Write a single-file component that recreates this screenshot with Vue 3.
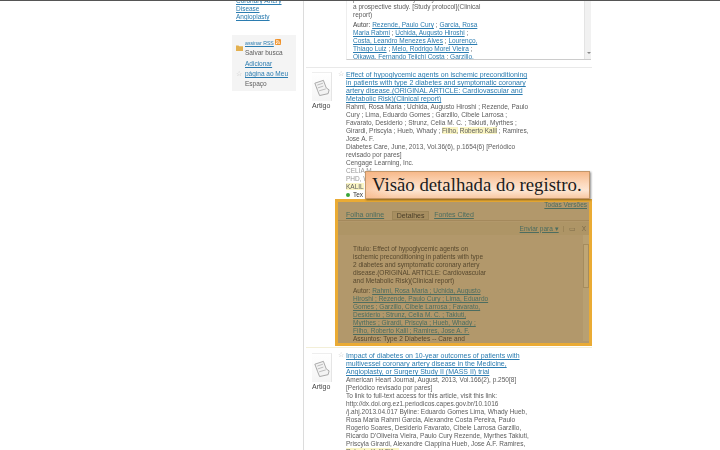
<script setup>
const topLines = [
  { t: 'a prospective study. [Study protocol](Clinical' },
  { t: 'report)' }
]
const topAuthors = [
  ['Autor:  ', 'Rezende, Paulo Cury', ' ; ', 'Garcia, Rosa'],
  ['', 'Maria Rabmi', ' ; ', 'Uchida, Augusto Hiroshi', ' ;'],
  ['', 'Costa, Leandro Menezes Alves', ' ; ', 'Lourenço,'],
  ['', 'Thiago Luiz', ' ; ', 'Melo, Rodrigo Morel Vieira', ' ;'],
  ['', 'Oikawa, Fernando Teiichi Costa', ' ; ', 'Garzillo,']
]
const r1Title = [
  'Effect of hypoglycemic agents on ischemic preconditioning',
  'in patients with type 2 diabetes and symptomatic coronary',
  'artery disease.(ORIGINAL ARTICLE: Cardiovascular and',
  'Metabolic Risk)(Clinical report)'
]
const r1Body = [
  'Rahmi, Rosa Maria ; Uchida, Augusto Hiroshi ; Rezende, Paulo',
  'Cury ; Lima, Eduardo Gomes ; Garzillo, Cibele Larrosa ;',
  'Favarato, Desiderio ; Strunz, Celia M. C. ; Takiuti, Myrthes ;'
]
const r1Rest = [
  'Jose A. F.',
  'Diabetes Care, June, 2013, Vol.36(6), p.1654(6) [Periódico',
  'revisado por pares]',
  'Cengage Learning, Inc.'
]
const detailTitle = [
  'Título:    Effect of hypoglycemic agents on',
  'ischemic preconditioning in patients with type',
  '2 diabetes and symptomatic coronary artery',
  'disease.(ORIGINAL ARTICLE: Cardiovascular',
  'and Metabolic Risk)(Clinical report)'
]
const detailAuthors = [
  ['Autor:  ', 'Rahmi, Rosa Maria ; Uchida, Augusto'],
  ['', 'Hiroshi ; Rezende, Paulo Cury ; Lima, Eduardo'],
  ['', 'Gomes ; Garzillo, Cibele Larrosa ; Favarato,'],
  ['', 'Desiderio ; Strunz, Celia M. C. ; Takiuti,'],
  ['', 'Myrthes ; Girardi, Priscyla ; Hueb, Whady ;'],
  ['', 'Filho, Roberto Kalil ; Ramires, Jose A. F.']
]
const r2Title = [
  'Impact of diabetes on 10-year outcomes of patients with',
  'multivessel coronary artery disease in the Medicine,',
  'Angioplasty, or Surgery Study II (MASS II) trial'
]
const r2Body = [
  'American Heart Journal, August, 2013, Vol.166(2), p.250[8]',
  '[Periódico revisado por pares]',
  'To link to full-text access for this article, visit this link:',
  'http://dx.doi.org.ez1.periodicos.capes.gov.br/10.1016',
  '/j.ahj.2013.04.017 Byline: Eduardo Gomes Lima, Whady Hueb,',
  'Rosa Maria Rahmi Garcia, Alexandre Costa Pereira, Paulo',
  'Rogerio Soares, Desiderio Favarato, Cibele Larrosa Garzillo,',
  'Ricardo D\'Oliveira Vieira, Paulo Cury Rezende, Myrthes Takiuti,',
  'Priscyla Girardi, Alexandre Ciappina Hueb, Jose A.F. Ramires,'
]
</script>

<template>
  <div class="page">
    <aside class="side">
      <div class="side-links">
        <a>Coronary Artery</a>
        <a>Disease</a>
        <a>Angioplasty</a>
      </div>
      <div class="side-box">
        <div class="side-row">
          <svg class="s-ic" viewBox="0 0 7 7"><path d="M0 1.500h2.500l.7.8H7V7H0z" fill="#e3b04f" /></svg>
          <a class="rss-link">assinar RSS</a>
          <svg class="rss" viewBox="0 0 6 6"><rect width="6" height="6" rx="1" fill="#f0922a" /><circle cx="1.500" cy="4.500" r=".7" fill="#fff" /><path d="M1 2.600A2.400 2.400 0 0 1 3.400 5M1 1.200A3.800 3.800 0 0 1 4.800 5" fill="none" stroke="#fff" stroke-width=".7" /></svg>
        </div>
        <div class="side-row plain">Salvar busca</div>
        <div class="side-row"><a>Adicionar</a></div>
        <div class="side-row star-row"><span class="s-star">☆</span><a>página ao Meu</a></div>
        <div class="side-row plain">Espaço</div>
      </div>
    </aside>

    <main class="main">
      <section class="top-panel">
        <div class="cut">patients with coronary artery disease:</div>
        <div v-for="l in topLines" :key="l.t" class="ln">{{ l.t }}</div>
        <div class="authors">
          <div v-for="(a, i) in topAuthors" :key="i" class="ln">
            <b class="lab">{{ a[0] }}</b><a>{{ a[1] }}</a>{{ a[2] }}<a>{{ a[3] }}</a>{{ a[4] }}
          </div>
        </div>
        <div class="top-scroll"><i></i></div>
      </section>

      <hr class="sep first" />

      <article class="result">
        <div class="thumb-col">
          <div class="thumb">
            <svg viewBox="0 0 20 28"><path d="M3 10l9-3 3 8 3 2-1 4-9 2-2-5z" fill="#f3f3f3" stroke="#9c9c9c" stroke-width=".9" /><path d="M5.500 12l6-2M6 15l6-2M7.500 18l7-2" stroke="#b4b4b4" stroke-width=".9" /></svg>
          </div>
          <span class="kind">Artigo</span>
        </div>
        <span class="star">☆</span>
        <div class="body">
          <a v-for="l in r1Title" :key="l" class="ln title">{{ l }}</a>
          <div v-for="l in r1Body" :key="l" class="ln">{{ l }}</div>
          <div class="ln">Girardi, Priscyla ; Hueb, Whady ; <mark>Filho,</mark> <mark>Roberto Kalil</mark> ; Ramires,</div>
          <div v-for="l in r1Rest" :key="l" class="ln">{{ l }}</div>
          <div class="ln faint">CELIA M.</div>
          <div class="ln faint">PHD, W</div>
          <div class="ln"><mark>KALIL</mark></div>
          <div class="ln text-row"><i class="dot"></i>Tex</div>
        </div>
      </article>

      <section class="detail">
        <div class="versions"><a>Todas Versões</a></div>
        <nav class="tabs">
          <a>Folha online</a>
          <span class="tab-on">Detalhes</span>
          <a>Fontes Cited</a>
        </nav>
        <div class="tools">
          <a>Enviar para ▾</a>
          <span class="bar"></span>
          <span class="tool">▭</span>
          <span class="tool">X</span>
        </div>
        <div class="detail-body">
          <div class="detail-text">
            <div v-for="l in detailTitle" :key="l" class="ln">{{ l }}</div>
            <div class="d-authors">
              <div v-for="(a, i) in detailAuthors" :key="i" class="ln">{{ a[0] }}<a>{{ a[1] }}</a></div>
            </div>
            <div class="ln d-last">Assuntos:   Type 2 Diabetes -- Care and</div>
          </div>
          <div class="d-scroll"><i></i></div>
        </div>
      </section>

      <hr class="sep second" />

      <article class="result r2">
        <div class="thumb-col">
          <div class="thumb">
            <svg viewBox="0 0 20 28"><path d="M3 10l9-3 3 8 3 2-1 4-9 2-2-5z" fill="#f3f3f3" stroke="#9c9c9c" stroke-width=".9" /><path d="M5.500 12l6-2M6 15l6-2M7.500 18l7-2" stroke="#b4b4b4" stroke-width=".9" /></svg>
          </div>
          <span class="kind">Artigo</span>
        </div>
        <span class="star">☆</span>
        <div class="body">
          <a v-for="l in r2Title" :key="l" class="ln title">{{ l }}</a>
          <div v-for="l in r2Body" :key="l" class="ln">{{ l }}</div>
          <div class="ln"><mark>Roberto Kalil Filho</mark></div>
        </div>
      </article>
    </main>

    <div class="callout">Visão detalhada do registro.</div>
  </div>
</template>

<style>
html, body { margin: 0; background: #fff; }
</style>

<style scoped>
.page {
  position: relative;
  display: flex;
  width: 720px;
  height: 450px;
  padding-left: 232px;
  box-sizing: border-box;
  overflow: hidden;
  background: #fff;
  border-top: 1px solid #555;
  font: 6.5px/8px "Liberation Sans", Arial, sans-serif;
  color: #5c5c5c;
}
.page > aside, .page > main { filter: blur(0.42px); }
a { color: #2b7cb0; text-decoration: underline; }
.ln { display: block; height: 8px; white-space: nowrap; }
mark { background: #fbf6c4; color: inherit; }

.side { width: 64px; margin-right: 7px; flex: none; }
.side-links { margin-top: -4px; padding-left: 4px; }
.side-links a { display: block; height: 8px; white-space: nowrap; }
.side-box { margin-top: 14px; height: 56px; padding-top: 3px; box-sizing: border-box; background: #f4f4f4; position: relative; }
.side-row { display: flex; align-items: center; height: 10.300px; padding-left: 13px; position: relative; white-space: nowrap; }
.rss-link { font-size: 5.200px; }
.s-ic { position: absolute; left: 4px; top: 6px; width: 7px; height: 7px; }
.rss { width: 6px; height: 6px; margin: -3px 0 0 1px; }
.s-star { position: absolute; left: 4px; color: #bbb; font-size: 7px; }

.main { flex: 1; border-left: 1px solid #dcdcdc; min-width: 0; }

.top-panel {
  position: relative;
  margin-left: 42px;
  width: 245px;
  height: 59px;
  padding-left: 6px;
  box-sizing: border-box;
  border-left: 1px solid #eee;
  border-bottom: 1px solid #ccc;
  overflow: hidden;
}
.cut { margin-top: -6px; height: 8px; white-space: nowrap; }
.lab { font-weight: 400; color: #444; }
.authors { margin-top: 2px; }
.top-scroll { position: absolute; right: 0; top: 0; bottom: 0; width: 6px; background: #f1f1f1; border-left: 1px solid #e4e4e4; }
.top-scroll i { position: absolute; left: 1.500px; bottom: 3px; border: 2px solid transparent; border-top-color: #888; }

.sep { margin: 0 0 0 2px; width: 286px; border: 0; height: 1px; background: #e9e9e9; }
.sep.first { margin-top: 7px; }
.sep.second { margin-top: 1px; background: #f3efd8; }

.result { display: flex; padding: 3px 0 0 8px; }
.thumb-col { width: 26px; flex: none; }
.thumb {
  width: 19px;
  height: 28px;
  margin-top: 1px;
  border-top: 1px solid #eee;
  border-right: 1px solid #e5e5e5;
  background: linear-gradient(#fff, #f5f5f5);
}
.thumb svg { display: block; width: 19px; height: 28px; }
.kind { display: block; margin-top: 1px; font-size: 7px; color: #444; }
.star { width: 8px; flex: none; margin-top: -1px; color: #bbb; font-size: 7px; }
.title { font-size: 7px; font-weight: 400; }
.faint { color: #999; }
.text-row { color: #333; }
.dot { display: inline-block; width: 4px; height: 4px; border-radius: 50%; background: #3aa53a; margin-right: 3px; }

.detail {
  margin-left: 31px;
  width: 257px;
  height: 147px;
  box-sizing: border-box;
  border: 3px solid #eaab34;
  background: #b2986b;
  color: #57482e;
  overflow: hidden;
  display: flex;
  flex-direction: column;
}
.detail a { color: #4c6d60; }
.versions { margin-top: -1px; height: 8px; text-align: right; padding-right: 2px; }
.tabs { display: flex; align-items: center; height: 10px; margin-top: 1px; padding-left: 8px; border-bottom: 1px solid #a4895c; font-size: 7px; }
.tab-on { width: 37px; box-sizing: border-box; text-align: center; height: 9px; margin: 0 5px 0 8px; background: #a78e60; border: 1px solid #9c8558; color: #4a3e28; }
.tools { display: flex; align-items: center; justify-content: flex-end; height: 13px; padding-right: 3px; background: #ae9566; margin-top: 1px; }
.tools a { font-size: 6.500px; }
.bar { width: 1px; height: 6px; margin: 0 5px 0 4px; background: #9c8558; }
.tool { color: #7b6a48; margin-right: 6px; }
.tool:last-child { margin-right: 0; }
.detail-body { position: relative; flex: 1; padding: 10px 0 0 15px; min-height: 0; }
.d-authors { margin-top: 2px; }
.d-last { margin-top: 0; height: 9px; border-bottom: 1px solid #5c4e34; margin-left: -15px; padding-left: 15px; width: 251px; }
.d-scroll { position: absolute; top: 0; right: 0; bottom: 2px; width: 6px; background: #b8a072; }
.d-scroll i { position: absolute; left: 0; top: 9px; width: 6px; height: 44px; background: #bfa676; border: 1px solid #a58c5e; box-sizing: border-box; }

.r2 { padding-top: 4px; }

.callout {
  position: absolute;
  left: 365px;
  top: 170px;
  width: 225px;
  height: 28px;
  box-sizing: border-box;
  padding-left: 6px;
  background: linear-gradient(90deg, rgba(247, 180, 130, .55), rgba(255, 230, 205, 0) 12%), linear-gradient(#f7b98a, #fcd9bd 45%, #fde6d3 70%, #f9c9a3);
  border: 1px solid #c4976a;
  box-shadow: 1px 1px 2px rgba(0, 0, 0, .45);
  font: 18.8px/26px "Liberation Serif", "Times New Roman", serif;
  color: #1c1c1c;
  white-space: nowrap;
}
</style>
